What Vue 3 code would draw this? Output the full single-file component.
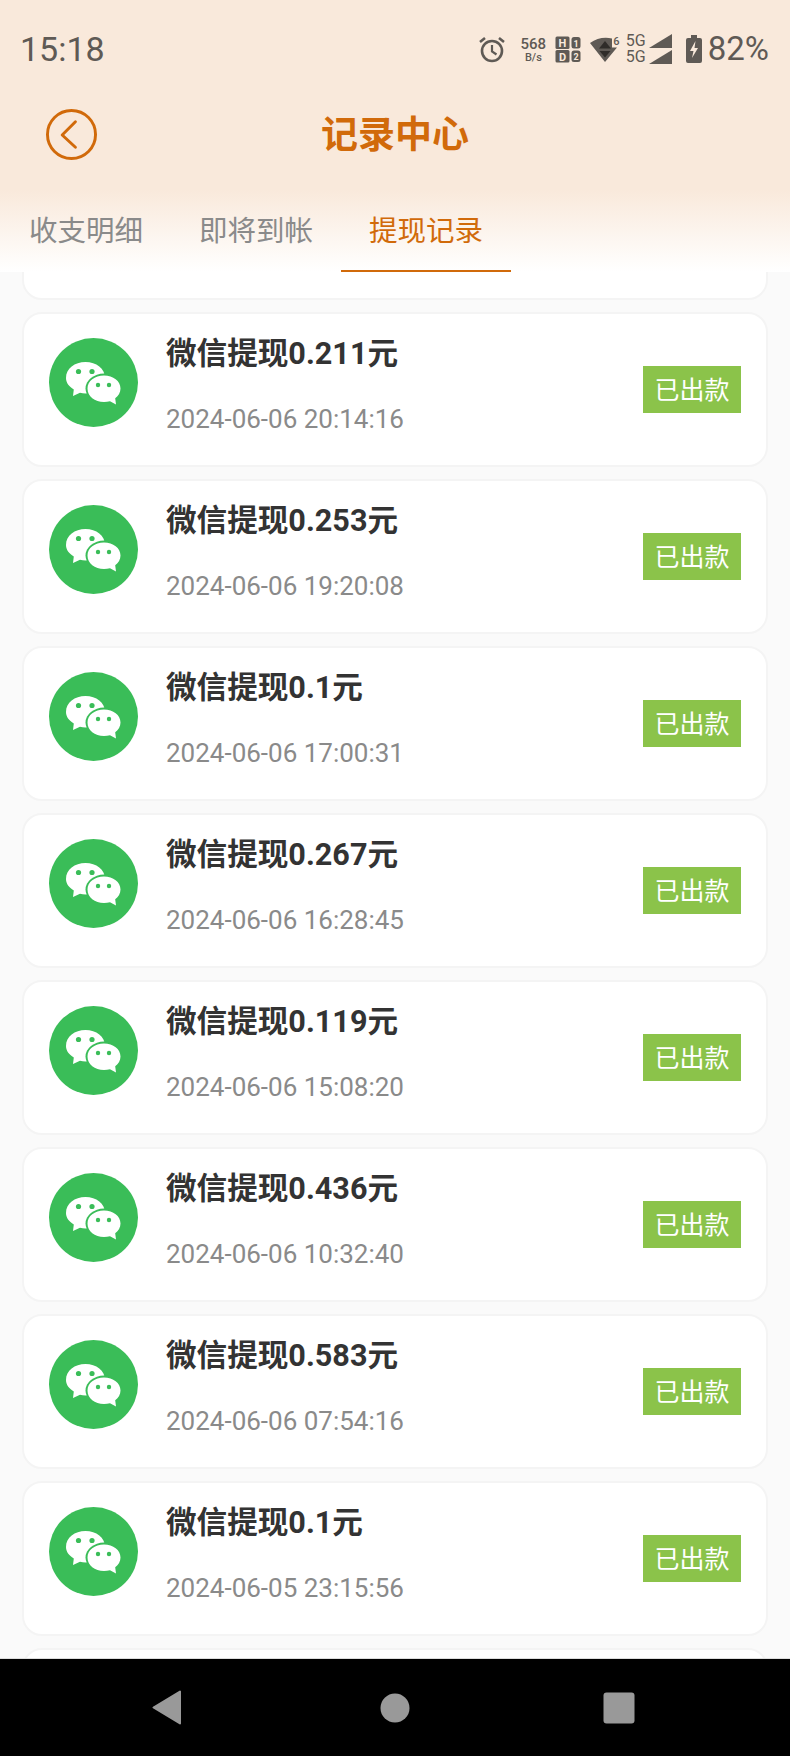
<template>
  <div class="page">
    <header class="head">
      <div class="status">
        <span class="time">15:18</span>
        <div class="status-icons">
          <svg class="ic-alarm" width="26" height="27" viewBox="0 0 26 27">
            <circle cx="13" cy="15" r="10" fill="none" stroke="#5f5a55" stroke-width="2.6" />
            <path d="M13 9v6.500l4.500 3" fill="none" stroke="#5f5a55" stroke-width="2.200" />
            <path d="M1 6l5-4M25 6l-5-4" stroke="#5f5a55" stroke-width="2.600" />
          </svg>
          <div class="speed">
            <span class="speed-num">568</span>
            <span class="speed-unit">B/s</span>
          </div>
          <svg class="ic-hd" width="26" height="27" viewBox="0 0 26 27">
            <rect x="0.500" y="0.500" width="14" height="12.500" rx="1.500" fill="#5f5a55" />
            <rect x="0.500" y="14" width="14" height="12.500" rx="1.500" fill="#5f5a55" />
            <rect x="16.500" y="1" width="9" height="11.500" rx="2.500" fill="#5f5a55" />
            <rect x="16.500" y="14.500" width="9" height="11.500" rx="2.500" fill="#5f5a55" />
            <text x="7.500" y="11" class="hd-t">H</text>
            <text x="7.500" y="24.500" class="hd-t">D</text>
            <text x="21" y="10.500" class="hd-s">1</text>
            <text x="21" y="24" class="hd-s">2</text>
          </svg>
          <svg class="ic-wifi" width="30" height="27" viewBox="0 0 30 27">
            <path d="M0 7Q10 0 22 2.500V11.500L27 11.500 15 26Z" fill="#5f5a55" />
            <path d="M15 5l6 7.500H9z" fill="#2f2c29" />
            <path d="M9.500 15h11L15 21.500z" fill="#2f2c29" />
            <text x="26.500" y="9" class="wifi-t">6</text>
          </svg>
          <div class="sig">
            <div class="sig-line">
              <span>5G</span>
              <svg width="23" height="14" viewBox="0 0 23 14"><path d="M0 14L23 0v14z" fill="#5f5a55" /></svg>
            </div>
            <div class="sig-line">
              <span>5G</span>
              <svg width="23" height="14" viewBox="0 0 23 14"><path d="M0 14L23 0v14z" fill="#5f5a55" /></svg>
            </div>
          </div>
          <svg class="ic-batt" width="16" height="28" viewBox="0 0 16 28">
            <path d="M5 0h6v3h3a2 2 0 0 1 2 2v21a2 2 0 0 1-2 2H2a2 2 0 0 1-2-2V5a2 2 0 0 1 2-2h3z" fill="#5f5a55" />
            <path d="M9.500 6L4 16h3.500L6 23l6-10H8.500z" fill="#f9e9db" />
          </svg>
          <span class="pct">82%</span>
        </div>
      </div>
      <div class="nav">
        <svg class="back" width="51" height="51" viewBox="0 0 52 52">
          <circle cx="26" cy="26" r="24.500" fill="none" stroke="#d16a0a" stroke-width="3" />
          <path d="M30 13L16.500 26.500 30 39" fill="none" stroke="#d16a0a" stroke-width="3" stroke-linecap="round" stroke-linejoin="round" />
        </svg>
        <h1 class="title">记录中心</h1>
      </div>
      <div class="tabs">
        <div
          v-for="t in tabs"
          :key="t"
          class="tab"
          :class="{ active: t === activeTab }"
        >{{ t }}</div>
      </div>
    </header>

    <main class="list">
      <div class="list-inner">
        <div v-for="(r, i) in rows" :key="i" class="card">
          <template v-if="r">
            <svg class="avatar" width="89" height="89" viewBox="0 0 89 89">
              <circle cx="44.500" cy="44.500" r="44.500" fill="#3abd58" />
              <path d="M17 40c0-9.500 8.700-16 19.500-16S56 30.500 56 40s-8.700 15.500-19.500 15.500c-2 0-3.800-.2-5.500-.7L24 58l.8-6.500C20 48.500 17 44.700 17 40z" fill="#fff" />
              <ellipse cx="55" cy="50.500" rx="18.500" ry="15" fill="#3abd58" />
              <path d="M38.500 50.500C38.500 43 45.800 37.500 55 37.500s16.500 5.500 16.500 13c0 4-2 7.300-5.300 9.700l.8 6.300-6-3.300c-1.900.5-4 .8-6 .8-9.200 0-16.500-5.500-16.500-13.500z" fill="#fff" />
              <circle cx="29.500" cy="33.500" r="2.600" fill="#3abd58" />
              <circle cx="43" cy="33.500" r="2.600" fill="#3abd58" />
              <circle cx="49" cy="47" r="2.200" fill="#3abd58" />
              <circle cx="60" cy="47" r="2.200" fill="#3abd58" />
            </svg>
            <div class="info">
              <div class="name">微信提现{{ r.amount }}元</div>
              <div class="date">{{ r.date }}</div>
            </div>
            <span class="tag">已出款</span>
          </template>
        </div>
      </div>
    </main>

    <footer class="sysbar">
      <svg class="sys-back" width="30" height="35" viewBox="0 0 30 35"><path d="M28 1.500v32L1.500 17.500z" fill="#999" stroke="#999" stroke-width="2" stroke-linejoin="round" /></svg>
      <svg width="30" height="30" viewBox="0 0 30 30"><circle cx="15" cy="15" r="14.500" fill="#999" /></svg>
      <svg class="sys-recent" width="32" height="32" viewBox="0 0 32 32"><rect x="0.500" y="0.500" width="31" height="31" rx="3" fill="#999" /></svg>
    </footer>
  </div>
</template>

<script setup>
const tabs = ['收支明细', '即将到帐', '提现记录']
const activeTab = '提现记录'

// null = the card cut off at the top and bottom of the list
const rows = [
  null,
  { amount: '0.211', date: '2024-06-06 20:14:16' },
  { amount: '0.253', date: '2024-06-06 19:20:08' },
  { amount: '0.1', date: '2024-06-06 17:00:31' },
  { amount: '0.267', date: '2024-06-06 16:28:45' },
  { amount: '0.119', date: '2024-06-06 15:08:20' },
  { amount: '0.436', date: '2024-06-06 10:32:40' },
  { amount: '0.583', date: '2024-06-06 07:54:16' },
  { amount: '0.1', date: '2024-06-05 23:15:56' },
  null
]
</script>

<style scoped>
.page {
  width: 790px;
  height: 1756px;
  display: flex;
  flex-direction: column;
  overflow: hidden;
  background: #fafafa;
  font-family: Roboto, "Noto Sans CJK SC", sans-serif;
}

.head {
  flex: none;
  height: 272px;
  background: linear-gradient(to bottom, #f9e9db 0, #f9e9db 190px, #ffffff 272px);
}

.status {
  height: 98px;
  padding: 0 21px 0 20px;
  box-sizing: border-box;
  display: flex;
  align-items: center;
  justify-content: space-between;
  color: #5f5a55;
}

.time {
  font-size: 34px;
}

.status-icons {
  display: flex;
  align-items: center;
}

.speed {
  margin-left: 15px;
  display: flex;
  flex-direction: column;
  align-items: center;
  width: 27px;
}

.speed-num {
  font-size: 15px;
  font-weight: 500;
  line-height: 16px;
}

.speed-unit {
  font-size: 11px;
  font-weight: 500;
  line-height: 11px;
}

.ic-hd {
  margin-left: 8px;
}

.hd-t {
  font-size: 11px;
  font-weight: 700;
  fill: #f9e9db;
  text-anchor: middle;
}

.hd-s {
  font-size: 9px;
  font-weight: 700;
  fill: #f9e9db;
  text-anchor: middle;
}

.ic-wifi {
  margin-left: 9px;
}

.wifi-t {
  font-size: 11px;
  font-weight: 500;
  fill: #5f5a55;
  text-anchor: middle;
}

.sig {
  margin-left: 6px;
  display: flex;
  flex-direction: column;
  gap: 2px;
}

.sig-line {
  display: flex;
  align-items: flex-end;
  gap: 3px;
  height: 14px;
  font-size: 16px;
  line-height: 14px;
}

.ic-batt {
  margin-left: 14px;
}

.pct {
  margin-left: 6px;
  font-size: 33px;
  line-height: 38px;
}

.nav {
  height: 72px;
  padding-left: 46px;
  display: flex;
  align-items: center;
  position: relative;
}

.title {
  position: absolute;
  left: 0;
  right: 0;
  top: 13px;
  margin: 0;
  line-height: 50px;
  text-align: center;
  font-size: 37px;
  font-weight: 700;
  color: #d16a0a;
}

.tabs {
  height: 102px;
  display: flex;
  padding-left: 1px;
}

.tab {
  width: 170px;
  height: 102px;
  line-height: 123px;
  box-sizing: border-box;
  text-align: center;
  font-size: 28.5px;
  color: #8a8a8a;
}

.tab.active {
  color: #d16a0a;
  border-bottom: 2px solid #d16a0a;
}

.list {
  flex: 1;
  min-height: 0;
  overflow: hidden;
}

.list-inner {
  margin-top: -127px;
  padding: 0 22px;
  display: flex;
  flex-direction: column;
  gap: 12px;
}

.card {
  flex: none;
  height: 155px;
  box-sizing: border-box;
  display: flex;
  align-items: center;
  padding: 0 25px;
  background: #fff;
  border: 2px solid #f4f4f4;
  border-radius: 20px;
}

.avatar {
  flex: none;
  margin-bottom: 14px;
}

.info {
  flex: 1;
  margin-left: 28px;
  margin-bottom: 10px;
  display: flex;
  flex-direction: column;
  gap: 31px;
}

.name {
  font-size: 30.6px;
  font-weight: 700;
  line-height: 38px;
  color: #333;
}

.date {
  font-size: 26px;
  line-height: 30px;
  color: #8a8a8a;
}

.tag {
  flex: none;
  width: 98px;
  height: 47px;
  line-height: 50px;
  text-align: center;
  font-size: 25px;
  color: #fff;
  background: #8bc34a;
}

.sysbar {
  flex: none;
  height: 98px;
  box-sizing: border-box;
  border-top: 1px solid #ddd;
  background: #000;
  display: grid;
  grid-template-columns: repeat(3, 1fr);
  place-items: center;
  padding: 0 56px;
}

.sys-back {
  margin-right: 4px;
}

.sys-recent {
  margin-right: 4px;
}
</style>
